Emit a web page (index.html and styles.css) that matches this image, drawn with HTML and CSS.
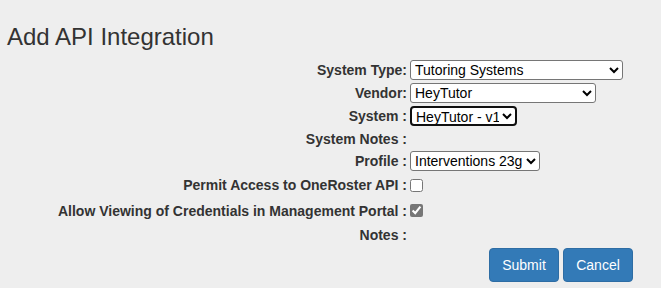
FILE: index.html
```html
<!DOCTYPE html>
<html>
<head>
<meta charset="utf-8">
<link rel="stylesheet" href="styles.css">
</head>
<body>
<div class="page">
  <h3 class="title">Add API Integration</h3>
  <form class="form">
    <label class="label">System Type:</label>
    <div class="field">
      <select class="select w-type"><option>Tutoring Systems</option></select>
    </div>
    <label class="label">Vendor:</label>
    <div class="field">
      <select class="select w-vendor"><option>HeyTutor</option></select>
    </div>
    <label class="label">System :</label>
    <div class="field">
      <select class="select w-system is-focused"><option>HeyTutor - v1</option></select>
    </div>
    <label class="label">System Notes :</label>
    <div class="field"></div>
    <label class="label">Profile :</label>
    <div class="field">
      <select class="select w-profile"><option>Interventions 23g</option></select>
    </div>
    <label class="label">Permit Access to OneRoster API :</label>
    <div class="field">
      <input type="checkbox" class="check">
    </div>
    <label class="label">Allow Viewing of Credentials in Management Portal :</label>
    <div class="field">
      <input type="checkbox" class="check" checked>
    </div>
    <label class="label">Notes :</label>
    <div class="field"></div>
    <div class="spacer"></div>
    <div class="actions">
      <button type="button" class="btn">Submit</button>
      <button type="button" class="btn">Cancel</button>
    </div>
  </form>
</div>
</body>
</html>
```

FILE: styles.css
```css
html, body {
  margin: 0;
  padding: 0;
  background: #eeeeee;
}
body {
  font-family: "Liberation Sans", Arial, Helvetica, sans-serif;
  font-size: 14px;
  color: #333333;
}
.page {
  padding: 0;
}
.title {
  font-size: 24px;
  font-weight: normal;
  line-height: 26px;
  margin: 24px 0 10px;
  padding-left: 7px;
  color: #333333;
}
.form {
  display: grid;
  width: 633px;
  grid-template-columns: 407px 1fr;
  grid-template-rows: 20px 20px 20px 19px 20px 22px 23px 20px 34px;
  column-gap: 3px;
  row-gap: 3px;
}
.label {
  display: flex;
  align-items: center;
  justify-content: flex-end;
  font-weight: bold;
  line-height: 20px;
  white-space: nowrap;
}
.field {
  display: flex;
  align-items: center;
}
.select {
  box-sizing: border-box;
  height: 20px;
  margin: 0;
  font-family: "Liberation Sans", Arial, sans-serif;
  font-size: 14px;
  color: #000;
  background-color: #fff;
  border: 1px solid #767676;
  border-radius: 3px;
}
.w-type { width: 213px; }
.w-vendor { width: 186px; }
.w-system { width: 107px; }
.w-profile { width: 130px; }
.is-focused {
  border: 2px solid #101010;
  border-radius: 4px;
  padding-left: 0;
}
.check {
  width: 13px;
  height: 13px;
  margin: 0;
  accent-color: #767676;
}
.actions {
  display: flex;
  justify-content: flex-end;
  align-items: flex-start;
  gap: 4px;
}
.btn {
  box-sizing: border-box;
  width: 70px;
  height: 34px;
  padding: 6px 12px;
  font-family: "Liberation Sans", Arial, sans-serif;
  font-size: 14px;
  line-height: 20px;
  color: #ffffff;
  background: #337ab7;
  border: 1px solid #2e6da4;
  border-radius: 4px;
}
```
